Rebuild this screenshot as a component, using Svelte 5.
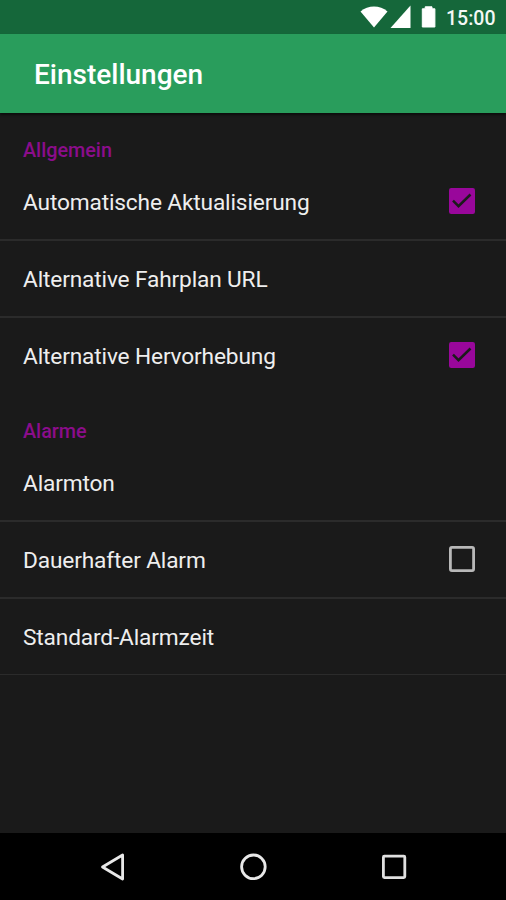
<script>
  const sections = [
    {
      title: 'Allgemein',
      items: [
        { label: 'Automatische Aktualisierung', checked: true },
        { label: 'Alternative Fahrplan URL' },
        { label: 'Alternative Hervorhebung', checked: true },
      ],
    },
    {
      title: 'Alarme',
      items: [
        { label: 'Alarmton' },
        { label: 'Dauerhafter Alarm', checked: false },
        { label: 'Standard-Alarmzeit' },
      ],
    },
  ];
</script>

<div class="screen">
  <div class="status">
    <svg width="80" height="34" viewBox="0 0 80 34" fill="#fff">
      <path d="M-.5 11.5C7 4.8 19 4.8 26.5 11.5L13 27.5Z" />
      <path d="M49.5 5.5V28H29.5Z" />
      <path d="M61.3 8.8H64.2V6.8H71V8.8H73.9V27H61.3Z" stroke="#fff" stroke-width="1" stroke-linejoin="round" />
    </svg>
    <span class="clock">15:00</span>
  </div>
  <header><h1>Einstellungen</h1></header>
  <main>
    {#each sections as section}
      <section>
        <h2>{section.title}</h2>
        <ul>
          {#each section.items as item}
            <li>
              <span>{item.label}</span>
              {#if item.checked === true}
                <svg class="box" width="26" height="26" viewBox="0 0 26 26">
                  <rect width="26" height="26" rx="2.2" fill="#99079b" />
                  <path d="M4 12.7L9.5 18.2L21.5 6.5" fill="none" stroke="#1b1b1b" stroke-width="2.5" />
                </svg>
              {:else if item.checked === false}
                <svg class="box" width="26" height="26" viewBox="0 0 26 26">
                  <rect x="1.4" y="1.4" width="23.2" height="23.2" rx="1.5" fill="none" stroke="#b8b8b8" stroke-width="2.8" />
                </svg>
              {/if}
            </li>
          {/each}
        </ul>
      </section>
    {/each}
  </main>
  <nav>
    <svg width="28" height="30" viewBox="0 0 28 30">
      <path d="M3.5 15L23.6 3V27Z" fill="none" stroke="#e8e8e8" stroke-width="2.8" stroke-linejoin="round" />
    </svg>
    <svg width="28" height="30" viewBox="0 0 28 30">
      <circle cx="14.4" cy="14.8" r="11.8" fill="none" stroke="#e8e8e8" stroke-width="2.8" />
    </svg>
    <svg width="28" height="30" viewBox="0 0 28 30">
      <rect x="3.4" y="4.2" width="21.4" height="21.4" rx="1" fill="none" stroke="#e0e0e0" stroke-width="2.8" />
    </svg>
  </nav>
</div>

<style>
  :global(body) { margin: 0; background: #1a1a1a; }
  .screen {
    width: 506px;
    height: 900px;
    display: flex;
    flex-direction: column;
    overflow: hidden;
    background: #1a1a1a;
    color: #eee;
    font-family: Roboto, sans-serif;
  }
  svg { display: block; flex: none; overflow: visible; }
  .status {
    height: 34px;
    flex: none;
    display: flex;
    justify-content: flex-end;
    align-items: center;
    box-sizing: border-box;
    padding-right: 11px;
    background: #15673a;
  }
  .clock {
    width: 49px;
    margin-left: 5px;
    font-size: 19.5px;
    line-height: 34px;
    font-weight: 500;
    color: #f3f8f5;
    padding-top: 3px;
  }
  header {
    height: 79px;
    flex: none;
    display: flex;
    align-items: center;
    padding: 3px 0 0 34px;
    box-sizing: border-box;
    background: #299d5c;
    box-shadow: 0 2px 2px #0d0d0d;
  }
  h1 { margin: 0; font-size: 28px; line-height: 34px; font-weight: 500; color: #fff; }
  main { flex: 1; min-height: 0; }
  h2 {
    box-sizing: border-box;
    height: 51px;
    margin: 0;
    padding: 26px 23px 0;
    font-size: 19.8px;
    line-height: 24px;
    font-weight: 500;
    color: #8b0d8b;
  }
  ul { list-style: none; margin: 0; padding: 0; }
  li {
    box-sizing: border-box;
    height: 77px;
    display: flex;
    align-items: center;
    justify-content: space-between;
    padding: 3px 31px 0 23px;
    border-bottom: 2px solid #2b2b2b;
    font-size: 22.7px;
    letter-spacing: -0.15px;
    line-height: 28px;
  }
  section:first-child li:last-child { height: 76px; padding-bottom: 1px; border-bottom: 0; }
  section:last-child li:last-child { border-bottom-width: 1px; height: 76px; }
  .box { margin-top: -4px; }
  nav {
    height: 67px;
    flex: none;
    display: flex;
    justify-content: center;
    gap: 112.5px;
    align-items: center;
    background: #000;
  }
</style>
